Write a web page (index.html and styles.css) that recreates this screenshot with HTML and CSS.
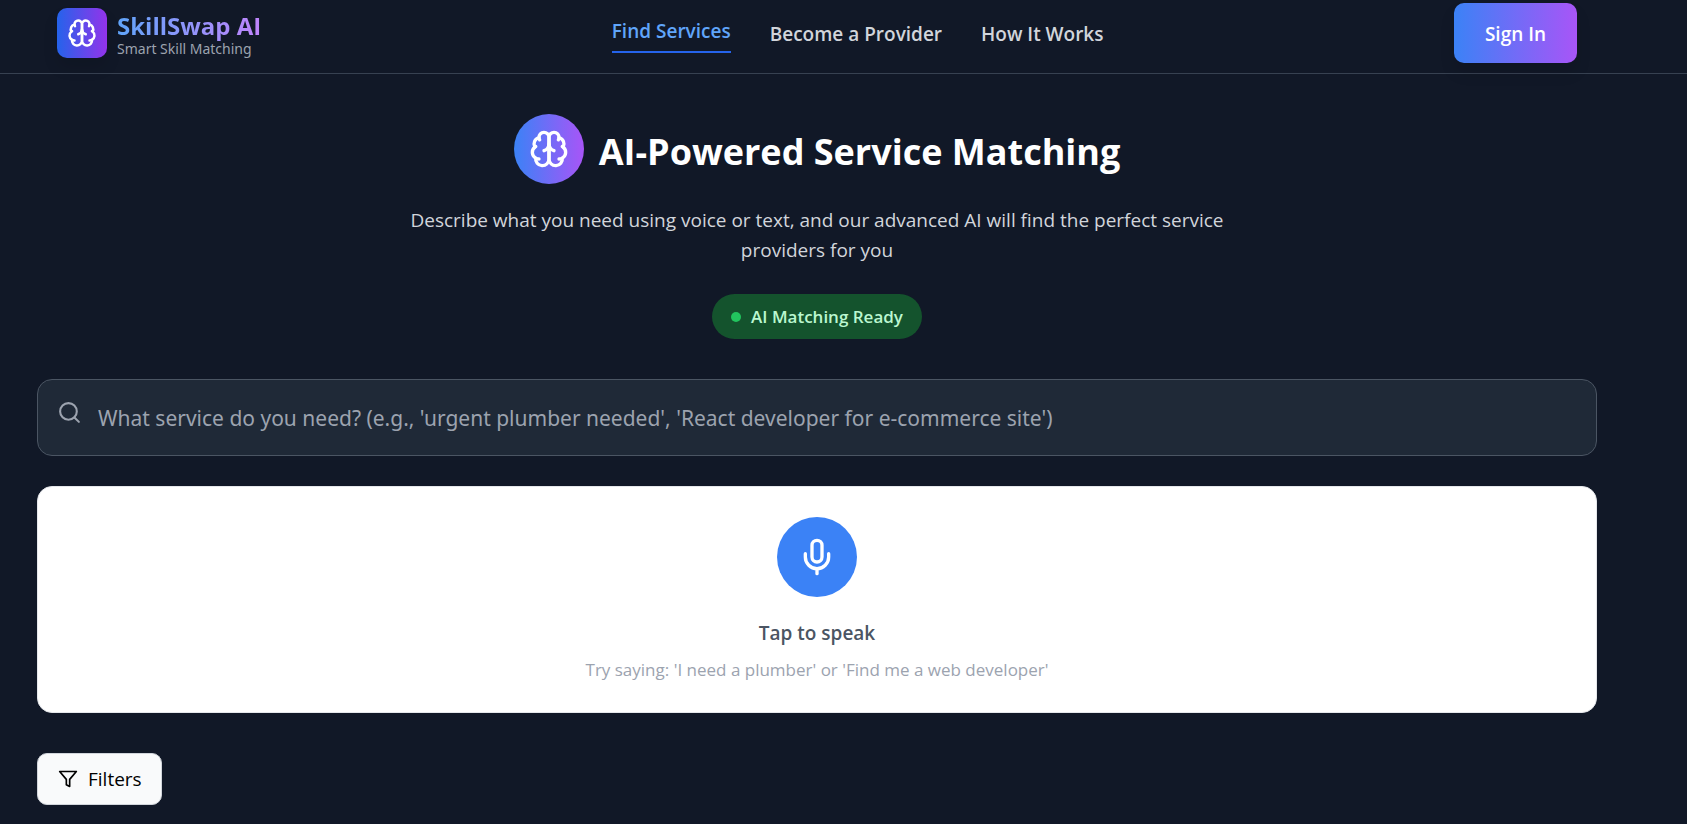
FILE: index.html
```html
<!DOCTYPE html>
<html lang="en">
<head>
<meta charset="utf-8">
<title>SkillSwap AI</title>
<link rel="stylesheet" href="styles.css">
</head>
<body>
<svg class="sprite" aria-hidden="true">
  <symbol id="brain" viewBox="0 0 24 24">
    <path d="M12 5a3 3 0 1 0-5.997.125 4 4 0 0 0-2.526 5.77 4 4 0 0 0 .556 6.588A4 4 0 1 0 12 18Z"/>
    <path d="M12 5a3 3 0 1 1 5.997.125 4 4 0 0 1 2.526 5.77 4 4 0 0 1-.556 6.588A4 4 0 1 1 12 18Z"/>
    <path d="M15 13a4.5 4.5 0 0 1-3-4 4.5 4.5 0 0 1-3 4"/>
    <path d="M17.599 6.5a3 3 0 0 0 .399-1.375"/>
    <path d="M6.003 5.125A3 3 0 0 0 6.401 6.5"/>
    <path d="M3.477 10.896a4 4 0 0 1 .585-.396"/>
    <path d="M19.938 10.5a4 4 0 0 1 .585.396"/>
    <path d="M6 18a4 4 0 0 1-1.967-.516"/>
    <path d="M19.967 17.484A4 4 0 0 1 18 18"/>
  </symbol>
</svg>
<header class="header">
  <div class="header-inner">
    <a class="brand" href="#">
      <span class="brand-mark"><svg class="icon icon-md"><use href="#brain"/></svg></span>
      <span class="brand-text">
        <span class="brand-name">SkillSwap AI</span>
        <span class="brand-tag">Smart Skill Matching</span>
      </span>
    </a>
    <nav class="nav">
      <a class="nav-link active" href="#">Find Services</a>
      <a class="nav-link" href="#">Become a Provider</a>
      <a class="nav-link" href="#">How It Works</a>
    </nav>
    <button class="sign-in" type="button">Sign In</button>
  </div>
</header>
<main class="main">
  <section class="hero">
    <div class="hero-heading">
      <span class="hero-mark"><svg class="icon icon-lg"><use href="#brain"/></svg></span>
      <h1 class="hero-title">AI-Powered Service Matching</h1>
    </div>
    <p class="hero-text">Describe what you need using voice or text, and our advanced AI will find the perfect service providers for you</p>
    <div class="status"><span class="status-dot"></span>AI Matching Ready</div>
  </section>
  <label class="search">
    <svg class="icon icon-sm search-icon" viewBox="0 0 24 24"><circle cx="11" cy="11" r="8"/><path d="m21 21-4.3-4.3"/></svg>
    <input class="search-input" type="text" aria-label="Service search" placeholder="What service do you need? (e.g., 'urgent plumber needed', 'React developer for e-commerce site')">
  </label>
  <section class="voice">
    <button class="mic" type="button" aria-label="Tap to speak">
      <svg class="icon icon-lg" viewBox="0 0 24 24"><path d="M12 2a3 3 0 0 0-3 3v7a3 3 0 0 0 6 0V5a3 3 0 0 0-3-3Z"/><path d="M19 10v2a7 7 0 0 1-14 0v-2"/><path d="M12 19v3"/></svg>
    </button>
    <p class="voice-title">Tap to speak</p>
    <p class="voice-hint">Try saying: 'I need a plumber' or 'Find me a web developer'</p>
  </section>
  <button class="filters" type="button">
    <svg class="icon icon-xs" viewBox="0 0 24 24"><path d="M22 3H2l8 9.460V19l4 2v-8.540L22 3z"/></svg>
    Filters
  </button>
</main>
</body>
</html>
```
FILE: styles.css
```css
* {
  box-sizing: border-box;
  margin: 0;
}

body {
  background: #111827;
  color: #fff;
  font-family: "Open Sans", "Noto Sans", sans-serif;
  font-size: 19px;
  line-height: 30px;
}

a {
  color: inherit;
  text-decoration: none;
}

button,
input {
  font: inherit;
}

.sprite {
  position: absolute;
  width: 0;
  height: 0;
}

.icon {
  display: block;
  flex: none;
  fill: none;
  stroke: currentColor;
  stroke-width: 2;
  stroke-linecap: round;
  stroke-linejoin: round;
}

.icon-xs { width: 20px; height: 20px; }
.icon-sm { width: 25px; height: 25px; }
.icon-md { width: 30px; height: 30px; }
.icon-lg { width: 40px; height: 40px; }

.header {
  padding: 3px 53px 10px 0;
  border-bottom: 1px solid #374151;
}

.header-inner {
  display: flex;
  align-items: center;
  justify-content: space-between;
  max-width: 1600px;
  margin: 0 auto;
  padding: 0 40px;
}

.brand {
  display: flex;
  align-items: center;
  gap: 10px;
}

.brand-mark {
  display: grid;
  place-items: center;
  width: 50px;
  height: 50px;
  border-radius: 10px;
  background: linear-gradient(90deg, #2563eb, #9333ea);
  box-shadow: 0 10px 15px rgba(0, 0, 0, 0.1);
}

.brand-text {
  display: flex;
  flex-direction: column;
}

.brand-name {
  background: linear-gradient(90deg, #60a5fa, #c084fc);
  background-clip: text;
  color: transparent;
  font-size: 24px;
  font-weight: 700;
  line-height: 30px;
}

.brand-tag {
  color: #9ca3af;
  font-family: "Noto Sans", sans-serif;
  font-size: 14px;
  line-height: 15px;
}

.nav {
  display: flex;
  align-items: center;
  gap: 39px;
}

.nav-link {
  padding-top: 2px;
  color: #d1d5db;
  font-weight: 600;
}

.nav-link.active {
  padding-bottom: 5px;
  border-bottom: 2px solid #2563eb;
  color: #60a5fa;
}

.sign-in {
  min-width: 123px;
  padding: 16px 30px 14px;
  border: 0;
  border-radius: 10px;
  background: linear-gradient(90deg, #3b82f6, #a855f7);
  box-shadow: 0 10px 15px rgba(0, 0, 0, 0.1);
  color: #fff;
  font-weight: 600;
}

.main {
  max-width: 1653px;
  margin: 0 auto;
  padding: 40px 73px 20px 20px;
}

.hero {
  display: flex;
  flex-direction: column;
  align-items: center;
  margin-bottom: 40px;
}

.hero-heading {
  display: flex;
  align-items: center;
  gap: 15px;
  margin-bottom: 21px;
}

.hero-mark {
  display: grid;
  place-items: center;
  width: 70px;
  height: 70px;
  border-radius: 50%;
  background: linear-gradient(90deg, #3b82f6, #a855f7);
}

.hero-title {
  padding-top: 4px;
  font-size: 36px;
  font-weight: 700;
  line-height: 45px;
}

.hero-text {
  max-width: 840px;
  margin-bottom: 29px;
  color: #d1d5db;
  text-align: center;
}

.status {
  display: flex;
  align-items: center;
  gap: 10px;
  padding: 10px 19px;
  border-radius: 25px;
  background: #14532d;
  color: #bbf7d0;
  font-size: 17px;
  font-weight: 600;
  line-height: 25px;
}

.status-dot {
  width: 10px;
  height: 10px;
  border-radius: 50%;
  background: #22c55e;
}

.search {
  display: flex;
  gap: 16px;
  margin-bottom: 30px;
  padding: 20px 20px 20px 19px;
  border: 1px solid #4b5563;
  border-radius: 15px;
  background: #1f2937;
  color: #9ca3af;
}

.search-input {
  flex: 1;
  height: 35px;
  padding: 0;
  border: 0;
  outline: 0;
  background: none;
  color: #fff;
  font-family: "Noto Sans", sans-serif;
  font-size: 21px;
}

.search-input::placeholder {
  color: #9ca3af;
}

.voice {
  display: flex;
  flex-direction: column;
  align-items: center;
  margin-bottom: 40px;
  padding: 30px;
  border: 1px solid #e5e7eb;
  border-radius: 15px;
  background: #fff;
}

.mic {
  display: grid;
  place-items: center;
  width: 80px;
  height: 80px;
  margin-bottom: 21px;
  padding: 0;
  border: 0;
  border-radius: 50%;
  background: #3b82f6;
  color: #fff;
}

.voice-title {
  margin-bottom: 9px;
  color: #4b5563;
  font-weight: 600;
}

.voice-hint {
  color: #9ca3af;
  font-size: 17px;
  line-height: 25px;
}

.filters {
  display: flex;
  align-items: center;
  gap: 10px;
  padding: 10px 19px 10px 20px;
  border: 1px solid #d1d5db;
  border-radius: 10px;
  background: #f9fafb;
  color: #000;
}
```
